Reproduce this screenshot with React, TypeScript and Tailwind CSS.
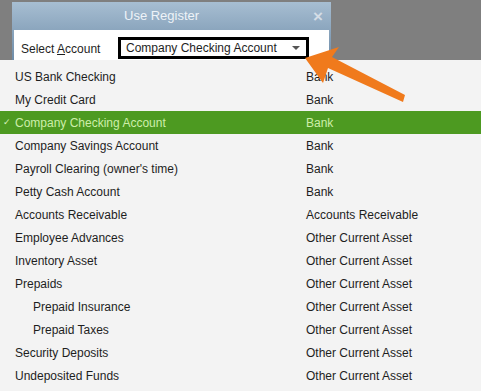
const rows: { name: string; type: string; indent?: boolean; selected?: boolean }[] = [
  { name: "US Bank Checking", type: "Bank" },
  { name: "My Credit Card", type: "Bank" },
  { name: "Company Checking Account", type: "Bank", selected: true },
  { name: "Company Savings Account", type: "Bank" },
  { name: "Payroll Clearing (owner's time)", type: "Bank" },
  { name: "Petty Cash Account", type: "Bank" },
  { name: "Accounts Receivable", type: "Accounts Receivable" },
  { name: "Employee Advances", type: "Other Current Asset" },
  { name: "Inventory Asset", type: "Other Current Asset" },
  { name: "Prepaids", type: "Other Current Asset" },
  { name: "Prepaid Insurance", type: "Other Current Asset", indent: true },
  { name: "Prepaid Taxes", type: "Other Current Asset", indent: true },
  { name: "Security Deposits", type: "Other Current Asset" },
  { name: "Undeposited Funds", type: "Other Current Asset" },
];

export default function App() {
  return (
    <div className="relative w-[481px] h-[391px] overflow-hidden bg-[#f3f3f3] font-['Liberation_Sans',Arial,sans-serif] text-[12px] text-[#1e1e1e]">
      {/* dialog over grey backdrop */}
      <div className="h-[60px] bg-[#7f7f7f] pl-[12px] pt-[2px]">
        <div className="w-[319px] h-[58px] flex flex-col bg-gradient-to-b from-[#a7bed2] to-[#6e8ca8] px-[2px]">
          <div className="h-[28px] flex items-center shrink-0">
            <span className="ml-[110px] text-[13px] text-[#eef3f8]">Use Register</span>
            <span className="ml-auto mr-[6px] text-[17px] font-bold leading-none text-[#d4dde6]">×</span>
          </div>
          <div className="flex-1 bg-white flex items-center pl-[7px] pt-[6px]">
            <span className="text-[12px] w-[97px] mt-[2px]">
              Select <span className="underline">A</span>ccount
            </span>
            <div className="w-[191px] h-[22px] border-[3px] border-black bg-white flex items-center pl-[5px] pr-[6px]">
              <span className="text-[12px]">Company Checking Account</span>
              <span className="ml-auto w-0 h-0 border-l-[4px] border-r-[4px] border-t-[4px] border-l-transparent border-r-transparent border-t-[#555]" />
            </div>
          </div>
        </div>
      </div>

      {/* account list */}
      <div className="pt-[5px]">
        {rows.map((r) => (
          <div
            key={r.name}
            className={`h-[23px] flex items-center ${r.selected ? "bg-[#4d9a21] text-[#cdeeaa]" : ""}`}
          >
            <span className="w-[15px] text-[9px] pl-[3px] text-[#d8f2bd]">{r.selected ? "✓" : ""}</span>
            <span className={`w-[291px] ${r.indent ? "pl-[18px]" : ""}`}>{r.name}</span>
            <span>{r.type}</span>
          </div>
        ))}
      </div>

      {/* orange callout arrow */}
      <svg className="absolute left-0 top-0" width="481" height="391" viewBox="0 0 481 391">
        <polygon
          points="305,58 339,47 332,57 405,95 403,102 328,68 323,83"
          fill="#f07a1c"
        />
      </svg>
    </div>
  );
}
